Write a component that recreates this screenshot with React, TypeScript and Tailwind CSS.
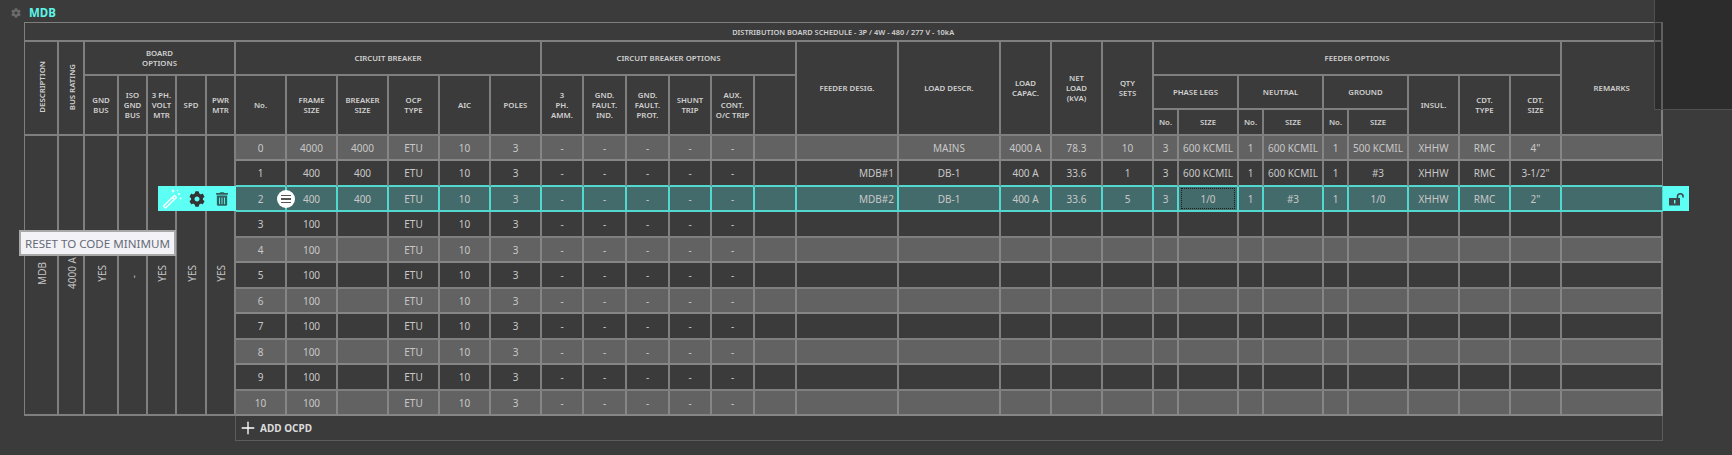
import React from "react";
import { Plus } from "lucide-react";
import { FaCog, FaTrashAlt } from "react-icons/fa";

const colWidths = [
  "w-[34px]", "w-[26px]", "w-[34px]", "w-[29px]", "w-[29px]", "w-[30px]", "w-[29px]",
  "w-[51px]", "w-[51px]", "w-[51px]", "w-[51px]", "w-[51px]", "w-[51px]",
  "w-[42px]", "w-[43px]", "w-[43px]", "w-[42px]", "w-[43px]", "w-[42px]",
  "w-[102px]", "w-[102px]", "w-[51px]", "w-[51px]", "w-[51px]",
  "w-[25px]", "w-[60px]", "w-[25px]", "w-[60px]", "w-[25px]", "w-[60px]",
  "w-[51px]", "w-[51px]", "w-[51px]", "w-[101px]",
];

const hdBase = "border-r-2 border-b-2 border-[#7f7f7f] text-center align-middle font-semibold leading-[10px] text-[#d0d0d0] p-0";
const hd = `${hdBase} text-[7.8px]`;
const sideHd = hd;
const rot = "[writing-mode:vertical-rl] rotate-180 inline-block translate-x-[1px]";
const side = "border-r-2 border-b-2 border-[#7f7f7f] text-center align-middle text-[10px] text-[#c4c4c4] p-0";

const dashes = ["-", "-", "-", "-", "-", ""];
const blankTail = ["", "", "", "", "", "", "", "", "", "", "", "", "", "", "", ""];

const rows: { cells: string[]; h: string }[] = [
  { h: "h-[25px]", cells: ["0", "4000", "4000", "ETU", "10", "3", ...dashes, "", "MAINS", "4000 A", "78.3", "10", "3", "600 KCMIL", "1", "600 KCMIL", "1", "500 KCMIL", "XHHW", "RMC", '4"', ""] },
  { h: "h-[26px]", cells: ["1", "400", "400", "ETU", "10", "3", ...dashes, "MDB#1", "DB-1", "400 A", "33.6", "1", "3", "600 KCMIL", "1", "600 KCMIL", "1", "#3", "XHHW", "RMC", '3-1/2"', ""] },
  { h: "h-[25px]", cells: ["2", "400", "400", "ETU", "10", "3", ...dashes, "MDB#2", "DB-1", "400 A", "33.6", "5", "3", "1/0", "1", "#3", "1", "1/0", "XHHW", "RMC", '2"', ""] },
  { h: "h-[26px]", cells: ["3", "100", "", "ETU", "10", "3", ...dashes, ...blankTail] },
  { h: "h-[25px]", cells: ["4", "100", "", "ETU", "10", "3", ...dashes, ...blankTail] },
  { h: "h-[26px]", cells: ["5", "100", "", "ETU", "10", "3", ...dashes, ...blankTail] },
  { h: "h-[25px]", cells: ["6", "100", "", "ETU", "10", "3", ...dashes, ...blankTail] },
  { h: "h-[26px]", cells: ["7", "100", "", "ETU", "10", "3", ...dashes, ...blankTail] },
  { h: "h-[25px]", cells: ["8", "100", "", "ETU", "10", "3", ...dashes, ...blankTail] },
  { h: "h-[26px]", cells: ["9", "100", "", "ETU", "10", "3", ...dashes, ...blankTail] },
  { h: "h-[25px]", cells: ["10", "100", "", "ETU", "10", "3", ...dashes, ...blankTail] },
];

function Br({ a, b, c }: { a: string; b?: string; c?: string }) {
  return (
    <>
      {a}
      {b && <br />}
      {b}
      {c && <br />}
      {c}
    </>
  );
}

function Wand() {
  return (
    <svg width="22" height="22" viewBox="0 0 22 22" fill="none">
      <path d="M2.5 18 L13.5 7.5 L15.5 9.5 L4.5 20 Z" stroke="#fff" strokeWidth="1.3" fill="none" />
      <path d="M11.5 9.5 L13.5 11.5" stroke="#fff" strokeWidth="1.3" />
      <path d="M12 1.5 v3 M10.5 3 h3" stroke="#fff" strokeWidth="1" />
      <circle cx="18" cy="6" r="1" fill="#fff" />
      <circle cx="19.5" cy="10.5" r="0.9" fill="#fff" />
      <circle cx="16.5" cy="2.5" r="0.8" fill="#fff" />
    </svg>
  );
}

function Lock() {
  return (
    <svg width="16" height="13" viewBox="0 0 16 13">
      <rect x="0" y="5" width="11" height="7.5" fill="#3a4a4d" />
      <rect x="5" y="7" width="1.4" height="3.5" fill="#5dfff4" />
      <path d="M8.5 5.5 V3.6 a2.8 2.8 0 0 1 5.6 0 V4.5" fill="none" stroke="#3a4a4d" strokeWidth="1.6" />
    </svg>
  );
}

export default function App() {
  return (
    <div className="relative w-[1732px] h-[455px] overflow-hidden bg-[#3b3b3b] font-['Noto_Sans','Open_Sans',sans-serif]">
      <div className="flex items-center h-[22px] pl-[11px] pt-[4px] gap-[8px]">
        <FaCog className="w-[10px] h-[10px] text-[#6b6b6b]" />
        <span className="text-[11.5px] font-bold text-[#5df5e8] leading-none">MDB</span>
      </div>

      <table className="ml-[24px] w-[1639px] table-fixed border-separate border-spacing-0 border-l border-t border-[#7f7f7f]">
        <colgroup>
          {colWidths.map((w, i) => (
            <col key={i} className={w} />
          ))}
        </colgroup>
        <thead>
          <tr className="h-[19px]">
            <th colSpan={34} className={`${hdBase} border-r text-[7.4px]`}>DISTRIBUTION BOARD SCHEDULE - 3P / 4W - 480 / 277 V - 10kA</th>
          </tr>
          <tr className="h-[34px]">
            <th rowSpan={3} className={sideHd}><span className={rot}>DESCRIPTION</span></th>
            <th rowSpan={3} className={sideHd}><span className={rot}>BUS RATING</span></th>
            <th colSpan={5} className={hd}><Br a="BOARD" b="OPTIONS" /></th>
            <th colSpan={6} className={hd}>CIRCUIT BREAKER</th>
            <th colSpan={6} className={hd}>CIRCUIT BREAKER OPTIONS</th>
            <th rowSpan={3} className={hd}>FEEDER DESIG.</th>
            <th rowSpan={3} className={hd}>LOAD DESCR.</th>
            <th rowSpan={3} className={hd}><Br a="LOAD" b="CAPAC." /></th>
            <th rowSpan={3} className={hd}><Br a="NET" b="LOAD" c="(kVA)" /></th>
            <th rowSpan={3} className={hd}><Br a="QTY" b="SETS" /></th>
            <th colSpan={9} className={hd}>FEEDER OPTIONS</th>
            <th rowSpan={3} className={hd}>REMARKS</th>
          </tr>
          <tr className="h-[34px]">
            <th rowSpan={2} className={hd}><Br a="GND" b="BUS" /></th>
            <th rowSpan={2} className={hd}><Br a="ISO" b="GND" c="BUS" /></th>
            <th rowSpan={2} className={hd}><Br a="3 PH." b="VOLT" c="MTR" /></th>
            <th rowSpan={2} className={hd}>SPD</th>
            <th rowSpan={2} className={hd}><Br a="PWR" b="MTR" /></th>
            <th rowSpan={2} className={hd}>No.</th>
            <th rowSpan={2} className={hd}><Br a="FRAME" b="SIZE" /></th>
            <th rowSpan={2} className={hd}><Br a="BREAKER" b="SIZE" /></th>
            <th rowSpan={2} className={hd}><Br a="OCP" b="TYPE" /></th>
            <th rowSpan={2} className={hd}>AIC</th>
            <th rowSpan={2} className={hd}>POLES</th>
            <th rowSpan={2} className={hd}><Br a="3" b="PH." c="AMM." /></th>
            <th rowSpan={2} className={hd}><Br a="GND." b="FAULT." c="IND." /></th>
            <th rowSpan={2} className={hd}><Br a="GND." b="FAULT." c="PROT." /></th>
            <th rowSpan={2} className={hd}><Br a="SHUNT" b="TRIP" /></th>
            <th rowSpan={2} className={hd}><Br a="AUX." b="CONT." c="O/C TRIP" /></th>
            <th rowSpan={2} className={hd}></th>
            <th colSpan={2} className={hd}>PHASE LEGS</th>
            <th colSpan={2} className={hd}>NEUTRAL</th>
            <th colSpan={2} className={hd}>GROUND</th>
            <th rowSpan={2} className={hd}>INSUL.</th>
            <th rowSpan={2} className={hd}><Br a="CDT." b="TYPE" /></th>
            <th rowSpan={2} className={hd}><Br a="CDT." b="SIZE" /></th>
          </tr>
          <tr className="h-[26px]">
            <th className={hd}>No.</th>
            <th className={hd}>SIZE</th>
            <th className={hd}>No.</th>
            <th className={hd}>SIZE</th>
            <th className={hd}>No.</th>
            <th className={hd}>SIZE</th>
          </tr>
        </thead>
        <tbody>
          {rows.map((row, r) => {
            const striped = r === 0 || (r >= 4 && r % 2 === 0);
            const active = r === 2;
            const before = r === 1;
            return (
              <tr key={r} className={row.h}>
                {r === 0 &&
                  ["MDB", "4000 A", "YES", "-", "YES", "YES", "YES"].map((t, i) => (
                    <td key={i} rowSpan={11} className={side}>
                      <span className={rot}>{t}</span>
                    </td>
                  ))}
                {row.cells.map((c, i) => {
                  const feeder = i === 12;
                  const last = i === row.cells.length - 1;
                  const focus = active && i === 18;
                  return (
                    <td
                      key={i}
                      className={`${last ? "border-r" : "border-r-2"} border-b-2 p-0 text-center align-middle text-[10px] leading-none text-[#c8c8c8] ${
                        active ? "bg-[#446b6b] border-r-[#52d8cf] border-b-[#52d8cf]" : striped ? "bg-[#626262] border-r-[#868686] border-b-[#868686]" : before ? "border-r-[#7f7f7f] border-b-[#52d8cf]" : "border-r-[#7f7f7f] border-b-[#7f7f7f]"
                      } ${feeder ? "text-right pr-[3px]" : ""}`}
                    >
                      {focus ? (
                        <div className="mx-[2px] h-[21px] flex items-center justify-center border border-dotted border-[#1c1c1c]">{c}</div>
                      ) : (
                        c
                      )}
                    </td>
                  );
                })}
              </tr>
            );
          })}
        </tbody>
      </table>

      <div className="ml-[235px] w-[1428px] h-[25px] flex items-center gap-[2px] pl-[2px] border-l border-r border-b border-[#5c5c5c] text-[10px] font-bold text-[#dcdcdc]">
        <Plus className="w-[20px] h-[20px] text-white" strokeWidth={1.6} />
        <span>ADD OCPD</span>
      </div>

      {/* row toolbar */}
      <div className="absolute left-[158px] top-[186px] w-[78px] h-[25px] bg-[#5dfff4] flex items-center pl-[3px]">
        <Wand />
        <FaCog className="ml-[6px] w-[16px] h-[16px] text-[#333333]" />
        <FaTrashAlt className="ml-[11px] w-[12px] h-[14px] text-[#33605e]" />
      </div>
      <div className="absolute left-[277px] top-[190px] w-[18px] h-[18px] rounded-full bg-white flex flex-col items-center justify-center gap-[2px]">
        <span className="block w-[10px] h-[1.5px] bg-[#555555]" />
        <span className="block w-[10px] h-[1.5px] bg-[#555555]" />
        <span className="block w-[10px] h-[1.5px] bg-[#555555]" />
      </div>

      {/* lock */}
      <div className="absolute left-[1663px] top-[186px] w-[26px] h-[25px] bg-[#5dfff4] flex items-start pl-[6px] pt-[7px]">
        <Lock />
      </div>

      {/* tooltip */}
      <div className="absolute left-[19px] top-[230px] w-[157px] h-[26px] bg-[#f2f2f7] border-2 border-[#a8a8a8] flex items-center justify-center text-[11.6px] pt-[1px] text-[#666b76]">
        RESET TO CODE MINIMUM
      </div>

      {/* overlay panel */}
      <div className="absolute left-[1654px] top-0 right-0 h-[110px] bg-[#00000040] border-l border-b border-[#505050]" />
    </div>
  );
}
